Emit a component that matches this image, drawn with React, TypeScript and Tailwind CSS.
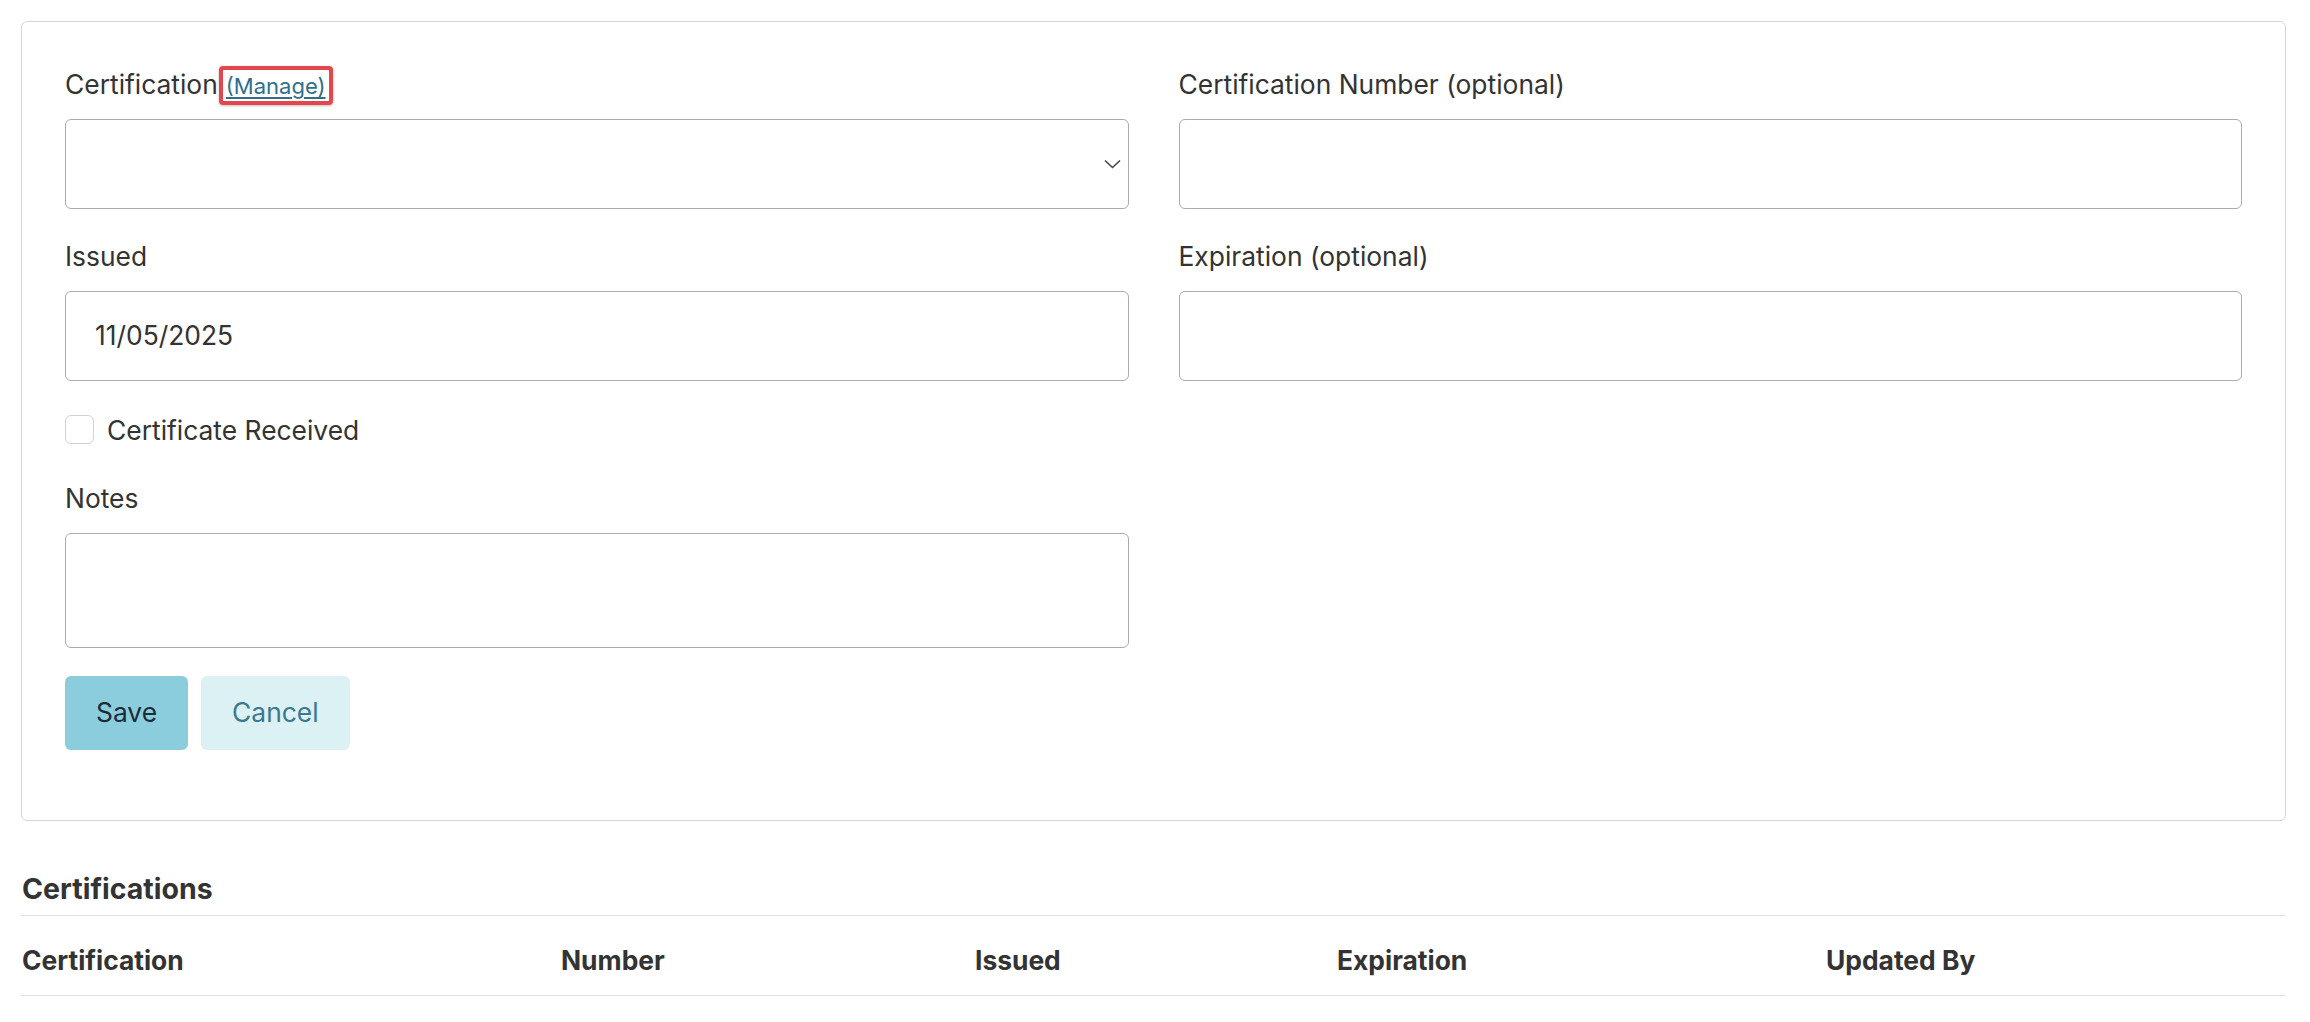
import { ReactNode } from "react";

const columns = [
  { label: "Certification", width: "w-[539px]" },
  { label: "Number", width: "w-[414px]" },
  { label: "Issued", width: "w-[362px]" },
  { label: "Expiration", width: "w-[489px]" },
  { label: "Updated By", width: "flex-1" },
];

function Field({ label, children }: { label: ReactNode; children: ReactNode }) {
  return (
    <div>
      <label className="mb-[17px] flex h-[36px] items-start text-[26.4px] leading-[36px]">{label}</label>
      {children}
    </div>
  );
}

function TextBox({ value = "" }: { value?: string }) {
  return (
    <div className="flex h-[90px] w-full items-center rounded-[6px] border-[1.5px] border-[#ababab] px-[29px] text-[26.4px]">
      {value}
    </div>
  );
}

export default function App() {
  return (
    <div className="min-h-screen bg-white pt-[21px] pl-[21px] pr-[24px] font-['Inter','Liberation_Sans',sans-serif] text-[#333]">
      {/* form card */}
      <div className="rounded-[6px] border-[1.5px] border-[#d6d6d6] px-[43px] pt-[43.5px] pb-[70px]">
        <div className="grid grid-cols-2 gap-x-[50px] gap-y-[29px]">
          <Field
            label={
              <>
                <span>Certification</span>
                <a
                  href="#"
                  className="ml-[1px] flex h-[39px] shrink-0 items-center rounded-[4px] border-4 border-[#e3474d] px-[3px] pt-[2px] text-[22px] leading-none text-[#2f6f8c] underline underline-offset-[3px] shadow-[0_1px_3px_rgba(0,0,0,0.25)]"
                >
                  (Manage)
                </a>
              </>
            }
          >
            <div className="relative h-[90px] w-full rounded-[6px] border-[1.5px] border-[#ababab]">
              <svg
                className="absolute right-[7px] top-1/2 -translate-y-1/2"
                width="17"
                height="10"
                viewBox="0 0 17 10"
                fill="none"
              >
                <path d="M1 1.5L8.5 8.5L16 1.5" stroke="#444" strokeWidth="1.6" />
              </svg>
            </div>
          </Field>

          <Field label="Certification Number (optional)">
            <TextBox />
          </Field>

          <Field label="Issued">
            <TextBox value="11/05/2025" />
          </Field>

          <Field label="Expiration (optional)">
            <TextBox />
          </Field>
        </div>

        <div className="w-[calc(50%-25px)]">
          <label className="mt-[31px] flex items-center gap-[13px] text-[26.4px] leading-[36px]">
            <span className="h-[29px] w-[29px] rounded-[6px] border-[1.5px] border-[#d2d2d2]" />
            Certificate Received
          </label>

          <div className="mt-[32px]">
            <Field label="Notes">
              <div className="h-[115px] w-full rounded-[6px] border-[1.5px] border-[#ababab]" />
            </Field>
          </div>

          <div className="mt-[28px] flex gap-[13px]">
            <button className="h-[74px] rounded-[6px] bg-[#8bcddc] px-[31px] text-[26.4px] text-[#1c2b38]">
              Save
            </button>
            <button className="h-[74px] rounded-[6px] bg-[#dcf1f4] px-[31px] text-[26.4px] text-[#3a7892]">
              Cancel
            </button>
          </div>
        </div>
      </div>

      {/* list */}
      <h2 className="mt-[50px] mb-[8px] pl-[1px] text-[28.5px] font-bold leading-[36px]">Certifications</h2>
      <div className="flex border-y-[1.5px] border-[#e0e0e0] pt-[26px] pb-[17px] text-[26.4px] font-bold leading-[36px]">
        {columns.map((c) => (
          <div key={c.label} className={`${c.width} pl-[1px]`}>
            {c.label}
          </div>
        ))}
      </div>
    </div>
  );
}
